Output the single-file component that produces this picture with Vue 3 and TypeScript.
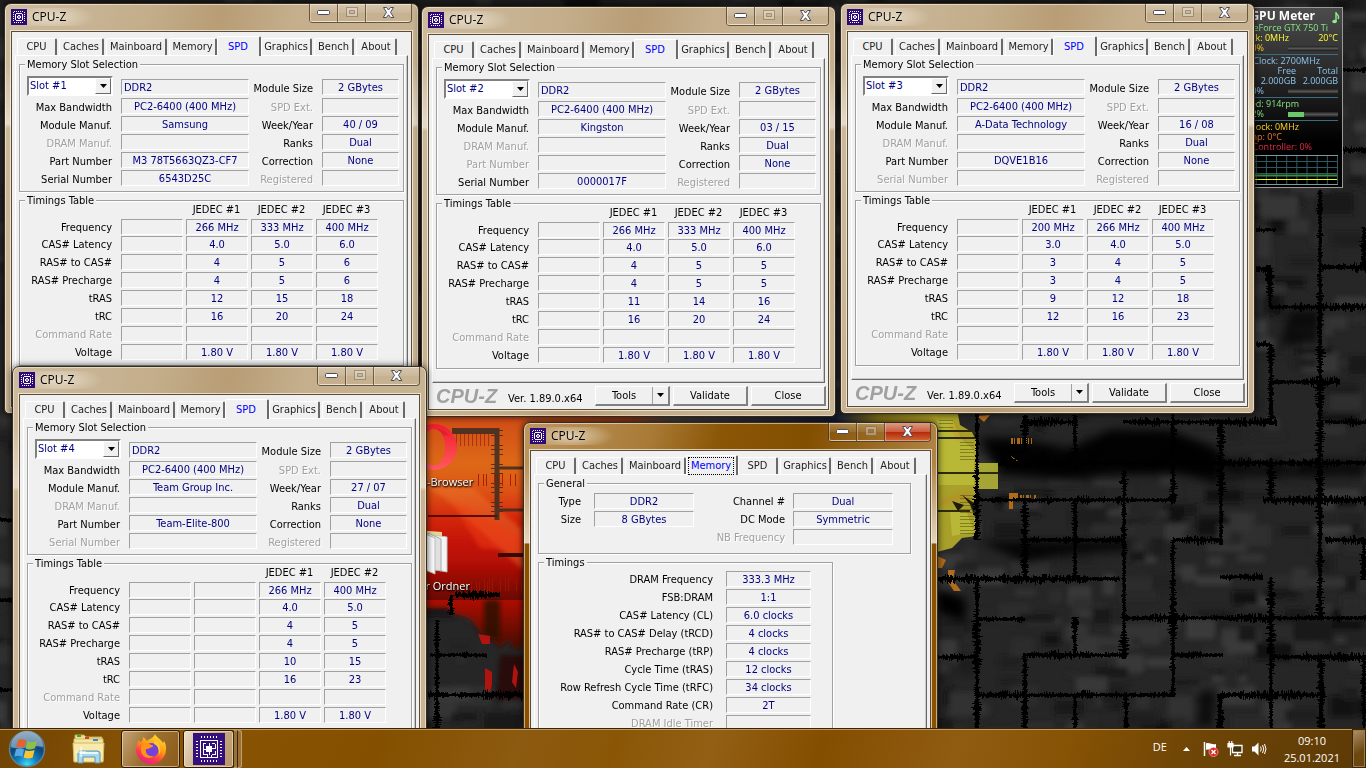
<script setup lang="ts">
interface Field {
  label: string
  value: string
  off?: boolean
}
interface TimingRow {
  label: string
  values: string[]
  off?: boolean
}
interface BaseWindow {
  id: string
  tab: string
  x: number
  y: number
  active?: boolean
  footer: boolean
}
interface SpdWindow extends BaseWindow {
  kind: 'spd'
  slot: string
  left: Field[]
  right: Field[]
  heads: string[]
  timings: TimingRow[]
}
interface MemoryWindow extends BaseWindow {
  kind: 'memory'
}
type CpuzWindow = SpdWindow | MemoryWindow

const tabs = [
  { name: 'CPU', width: 40 },
  { name: 'Caches', width: 45 },
  { name: 'Mainboard', width: 61 },
  { name: 'Memory', width: 48 },
  { name: 'SPD', width: 40 },
  { name: 'Graphics', width: 51 },
  { name: 'Bench', width: 40 },
  { name: 'About', width: 41 },
]

const rowNames = ['Frequency', 'CAS# Latency', 'RAS# to CAS#', 'RAS# Precharge', 'tRAS', 'tRC', 'Command Rate', 'Voltage']

function spd(
  x: number,
  y: number,
  slot: number,
  footer: boolean,
  maker: string,
  part: string,
  serial: string,
  week: string,
  heads: string[],
  columns: string[][],
): SpdWindow {
  return {
    id: `slot${slot}`,
    kind: 'spd',
    tab: 'SPD',
    x,
    y,
    footer,
    slot: `Slot #${slot}`,
    left: [
      { label: 'Max Bandwidth', value: 'PC2-6400 (400 MHz)' },
      { label: 'Module Manuf.', value: maker },
      { label: 'DRAM Manuf.', value: '', off: true },
      { label: 'Part Number', value: part, off: part === '' },
      { label: 'Serial Number', value: serial, off: serial === '' },
    ],
    right: [
      { label: 'SPD Ext.', value: '', off: true },
      { label: 'Week/Year', value: week },
      { label: 'Ranks', value: 'Dual' },
      { label: 'Correction', value: 'None' },
      { label: 'Registered', value: '', off: true },
    ],
    heads,
    timings: rowNames.map((label, row) => ({
      label,
      off: label === 'Command Rate',
      values: columns.map((c) => c[row] ?? ''),
    })),
  }
}

const none: string[] = []
const col = (mhz: number, ...t: (string | number)[]): string[] => [
  `${mhz} MHz`,
  ...t.map(String),
  '',
  '1.80 V',
]

const windows: CpuzWindow[] = [
  spd(4, 3, 1, false, 'Samsung', 'M3 78T5663QZ3-CF7', '6543D25C', '40 / 09', ['', 'JEDEC #1', 'JEDEC #2', 'JEDEC #3'], [
    none,
    col(266, '4.0', 4, 4, 12, 16),
    col(333, '5.0', 5, 5, 15, 20),
    col(400, '6.0', 6, 6, 18, 24),
  ]),
  spd(421, 6, 2, true, 'Kingston', '', '0000017F', '03 / 15', ['', 'JEDEC #1', 'JEDEC #2', 'JEDEC #3'], [
    none,
    col(266, '4.0', 4, 4, 11, 16),
    col(333, '5.0', 5, 5, 14, 20),
    col(400, '6.0', 5, 5, 16, 24),
  ]),
  spd(840, 3, 3, true, 'A-Data Technology', 'DQVE1B16', '', '16 / 08', ['', 'JEDEC #1', 'JEDEC #2', 'JEDEC #3'], [
    none,
    col(200, '3.0', 3, 3, 9, 12),
    col(266, '4.0', 4, 4, 12, 16),
    col(400, '5.0', 5, 5, 18, 23),
  ]),
  spd(12, 366, 4, false, 'Team Group Inc.', 'Team-Elite-800', '', '27 / 07', ['', '', 'JEDEC #1', 'JEDEC #2'], [
    none,
    none,
    col(266, '4.0', 4, 4, 10, 16),
    col(400, '5.0', 5, 5, 15, 23),
  ]),
  { id: 'memory', kind: 'memory', tab: 'Memory', x: 523, y: 422, active: true, footer: false },
]

const generalLeft: Field[] = [
  { label: 'Type', value: 'DDR2' },
  { label: 'Size', value: '8 GBytes' },
]
const generalRight: Field[] = [
  { label: 'Channel #', value: 'Dual' },
  { label: 'DC Mode', value: 'Symmetric' },
  { label: 'NB Frequency', value: '', off: true },
]
const memoryTimings: Field[] = [
  { label: 'DRAM Frequency', value: '333.3 MHz' },
  { label: 'FSB:DRAM', value: '1:1' },
  { label: 'CAS# Latency (CL)', value: '6.0 clocks' },
  { label: 'RAS# to CAS# Delay (tRCD)', value: '4 clocks' },
  { label: 'RAS# Precharge (tRP)', value: '4 clocks' },
  { label: 'Cycle Time (tRAS)', value: '12 clocks' },
  { label: 'Row Refresh Cycle Time (tRFC)', value: '34 clocks' },
  { label: 'Command Rate (CR)', value: '2T' },
  { label: 'DRAM Idle Timer', value: '', off: true },
]

/* Wallpaper: soft grey patches with a mesh of frayed black lines. */
let seed = 7
const rand = (): number => {
  seed = (seed * 16807) % 2147483647
  return seed / 2147483647
}
interface Patch {
  x: number
  y: number
  w: number
  h: number
  fill: string
}
const patches: Patch[] = Array.from({ length: 1800 }, () => {
  const tone = Math.round(14 + rand() * 50)
  return {
    x: Math.round(rand() * 1400) - 20,
    y: Math.round(rand() * 780) - 10,
    w: Math.round(10 + rand() * 30),
    h: Math.round(4 + rand() * 18),
    fill: `rgb(${tone},${tone},${tone})`,
  }
})
const meshH: number[][] = [
  [1022, 1075, 422], [1123, 1277, 422], [1325, 1366, 422], [998, 1366, 463], [977, 1176, 500], [1263, 1366, 500],
  [1023, 1123, 540], [1173, 1220, 540], [1325, 1366, 540], [938, 1120, 579], [1220, 1263, 577], [977, 1025, 619],
  [1123, 1366, 618], [938, 977, 657], [1023, 1127, 655], [1173, 1223, 655], [1273, 1366, 657], [977, 1175, 695],
  [1217, 1325, 695], [1256, 1276, 230], [1320, 1366, 267], [1256, 1272, 269], [1270, 1366, 307], [1256, 1270, 344],
  [1270, 1340, 382], [1340, 1366, 150], [1340, 1366, 70], [430, 487, 655], [428, 523, 695], [455, 500, 595],
  [0, 12, 520], [0, 12, 600], [0, 12, 690],
]
const meshV: number[][] = [
  [977, 413, 540], [977, 580, 728], [1025, 415, 450], [1025, 655, 728], [1025, 500, 578], [1075, 415, 470],
  [1075, 500, 580], [1075, 617, 655], [1075, 694, 728], [1124, 470, 655], [1126, 694, 728], [1173, 413, 500],
  [1173, 540, 697], [1221, 420, 545], [1220, 694, 728], [1271, 400, 424], [1271, 458, 500], [1271, 577, 728],
  [1320, 190, 620], [1321, 656, 728], [1270, 267, 307], [1271, 344, 420], [1364, 227, 270], [1364, 540, 580],
  [1364, 656, 728], [437, 620, 728], [451, 595, 615],
]
/* Teeth grow and shrink along a line, as a slowly varying random walk. */
function frayed(from: number, to: number, at: number, vertical: boolean): string {
  let reach = 2
  let d = ''
  for (let p = from; p < to; p += 1) {
    reach = Math.max(1, Math.min(5, reach + (rand() - 0.5) * 2))
    const a = Math.round(1 + rand() * reach)
    const b = Math.round(1 + rand() * reach)
    d += vertical ? `M${at - a} ${p + 0.5}H${at + b}` : `M${p + 0.5} ${at - a}V${at + b}`
  }
  return d
}
const mesh: string[] = [
  ...meshH.map(([a, b, y]) => frayed(a, b, y, false)),
  ...meshV.map(([x, a, b]) => frayed(a, b, x, true)),
]
const chipPins = [4, 6, 8, 10, 12]
const bigPins = [9, 12, 15, 18, 21, 24]
const graphX = [16, 26, 36, 46, 56, 66, 76, 86, 96, 106, 116, 126]
</script>

<template>
  <main class="desktop">
    <svg class="wallpaper" viewBox="0 0 1366 768" preserveAspectRatio="xMinYMin slice" aria-hidden="true">
      <defs>
        <filter id="soft" x="-5%" y="-5%" width="110%" height="110%"><feGaussianBlur stdDeviation="2.500" /></filter>
        <filter id="wide" x="-5%" y="-20%" width="110%" height="140%"><feGaussianBlur stdDeviation="5" /></filter>
        <filter id="soft2"><feGaussianBlur stdDeviation="2" /></filter>
        <linearGradient id="fire" x1="0" y1="0" x2="0" y2="1">
          <stop offset="0" stop-color="#cf4a18" />
          <stop offset=".25" stop-color="#de6a18" />
          <stop offset=".42" stop-color="#dc4a12" />
          <stop offset=".56" stop-color="#d01408" />
          <stop offset=".8" stop-color="#a80c04" />
          <stop offset="1" stop-color="#400804" />
        </linearGradient>
        <linearGradient id="strip">
          <stop offset="0" stop-color="#c8501c" />
          <stop offset=".25" stop-color="#9a3c1c" />
          <stop offset=".35" stop-color="#4c4440" />
          <stop offset=".6" stop-color="#2a2a38" />
          <stop offset=".75" stop-color="#161c38" />
          <stop offset=".85" stop-color="#80701c" />
          <stop offset="1" stop-color="#b8a828" />
        </linearGradient>
      </defs>
      <rect width="1366" height="768" fill="#262626" />
      <g filter="url(#soft)" opacity=".8">
        <rect v-for="(p, i) in patches" :key="i" :x="p.x" :y="p.y" :width="p.w" :height="p.h" :fill="p.fill" />
      </g>
      <g filter="url(#wide)" fill="#000">
        <path d="M980 438H1010L1070 448L1110 430H1170L1220 450V482L1180 474H1100L1080 480L1000 474Z" opacity=".95" />
        <path d="M978 541H1060L1130 540V550L1070 554L1025 562Z" opacity=".85" />
        <path d="M938 590L965 598V622L938 612Z" />
        <path d="M1213 460H1366V476H1230ZM1290 310H1320V345H1280ZM1200 690H1215V728H1195Z" opacity=".7" />
        <path d="M0 0H1366V6H0Z" opacity=".6" />
      </g>
      <rect x="523" y="414" width="417" height="12" fill="url(#strip)" />
      <path d="M420 414H526V645L514 650L508 640L500 648L492 640L480 632L470 618L455 614L447 608L420 608Z" fill="url(#fire)" filter="url(#soft2)" />
      <path d="M420 414H526V600H420Z" fill="url(#fire)" opacity=".6" />
      <g filter="url(#soft2)">
        <path d="M427 486L447 500L523 570V530L470 486Z" fill="#f08030" opacity=".4" />
        <path d="M450 500L480 548L523 552V536Z" fill="#f03c10" opacity=".5" />
        <path d="M484 600H500V640L484 636Z" fill="#241008" opacity=".8" />
        <path d="M500 655H526V700H496Z" fill="#280404" opacity=".7" />
      </g>
      <path d="M485 668L492 672V684L490 692L485 690ZM514 664L518 672L516 688L512 682ZM478 634L490 636V644H482Z" fill="#b01410" />
      <g fill="none" stroke="#3c2c20" opacity=".85">
        <path d="M452 431H497" stroke-width="6" />
        <path d="M497 428V520" stroke-width="5" />
        <path d="M497 468H523M498 510H523" stroke-width="3" />
        <path d="M428 516H497" stroke="#3a0804" stroke-width="2" />
        <path d="M497 430V520" stroke-width="12" stroke-dasharray="1 4 1 9 1 3" />
        <path d="M452 440H490" stroke="#a02c10" stroke-width="12" stroke-dasharray="1 3" />
        <path d="M498 555H523" stroke-width="4" stroke="#200" />
        <path d="M478 480H518M484 585H523M455 588H495" stroke="#9c1804" stroke-width="12" stroke-dasharray="1 4 1 2 1 7" />
      </g>
      <path d="M937 414H958L960 425L972 432L976 440V500L970 505L976 520V536L962 538L952 548L937 552Z" fill="#a8a02a" />
      <path d="M937 420H952L962 440L974 450V485H937ZM977 463H998V489H977ZM950 512L966 510L974 532L952 536Z" fill="#bcbc38" opacity=".85" />
      <path d="M952 425L960 440M940 502L970 494" stroke="#c87828" stroke-width="4" opacity=".5" fill="none" filter="url(#soft2)" />
      <path d="M937 431H976M937 438H976M937 473H998M937 511H970" stroke="#2c2a08" stroke-width="2" fill="none" />
      <path d="M967 442V462M967 495V536M946 420V430" stroke="#5a5814" stroke-width="14" stroke-dasharray="1 2 1 3" fill="none" opacity=".6" />
      <path d="M952 501L964 505L958 511ZM962 495L974 503V509Z" fill="#241808" />
      <path d="M977 416L990 415L984 422ZM1011 456L1018 461H1011ZM1009 493H1018V498L1013 500V509H1009ZM948 570H955L953 580L961 591H954L948 582ZM937 556L946 560L942 568H937Z" fill="#b06c1c" />
      <path d="M1011 441H1032M1020 498H1036" stroke="#a8681c" stroke-width="6" stroke-dasharray="2 1 1 2 3 1 1 3" />
      <path v-for="(d, i) in mesh" :key="i" :d="d" fill="none" stroke="#000" />
    </svg>

    <a class="shortcut opera" href="#opera">
      <svg width="48" height="48" viewBox="0 0 48 48" aria-hidden="true">
        <defs>
          <linearGradient id="op" x1="0" y1="0" x2="0" y2="1">
            <stop offset="0" stop-color="#f01b2d" />
            <stop offset="1" stop-color="#ff5a5c" />
          </linearGradient>
        </defs>
        <path fill="url(#op)" fill-rule="evenodd" d="M24 1A23 23 0 1 1 24 47A23 23 0 1 1 24 1ZM24 6C17 6 13 14 13 24S17 42 24 42S35 34 35 24S31 6 24 6Z" />
        <path fill="#b70d1e" opacity=".3" d="M24 6C30 5 36 8 40 13C38 12 36 12 34 13C31 9 28 6 24 6Z" />
      </svg>
      <span>Opera-Browser</span>
    </a>
    <a class="shortcut folder" href="#ordner">
      <svg width="48" height="48" viewBox="0 0 48 48" aria-hidden="true">
        <path d="M6 3L32 5V40L6 44Z" fill="#e8d48a" />
        <path d="M22 8L37 10V45L22 42Z" fill="#f4f4f4" stroke="#c4c4c4" />
        <path d="M18 6L31 12V44L18 42Z" fill="#e0e0e0" stroke="#aaa" />
        <path d="M8 4L25 11V47L8 40Z" fill="#fafafa" stroke="#bbb" />
      </svg>
      <span>Neuer Ordner</span>
    </a>

    <aside class="gadget" aria-label="GPU Meter">
      <h2>GPU Meter</h2>
      <svg class="note" width="8" height="13" viewBox="0 0 8 13" aria-hidden="true">
        <path d="M4 1V10M4 2C5 4 8 4 6 8" stroke="#8cf08c" stroke-width="1.4" fill="none" />
        <ellipse cx="2.600" cy="10.500" rx="2.300" ry="1.700" fill="#8cf08c" />
      </svg>
      <p class="green end-name">GeForce GTX 750 Ti</p>
      <p class="yellow split"><span class="reading">GPU Clock: 0MHz</span><span>20°C</span></p>
      <p class="gold split meter"><span class="percent">0%</span><i></i></p>
      <hr />
      <p class="sky end-mem">Mem. Clock: 2700MHz</p>
      <p class="sky pair"><span>Free</span><span>Total</span></p>
      <p class="sky pair"><span>2.000GB</span><span>2.000GB</span></p>
      <p class="sky split meter"><span class="percent">0%</span><i></i></p>
      <hr />
      <p class="green end-fan">Fan Speed: 914rpm</p>
      <p class="green split meter"><span class="percent">32%</span><i class="fill"></i></p>
      <hr />
      <p class="gold end-fan">PCB Clock: 0MHz</p>
      <p class="orange end-temp">PCB Temp: 0°C</p>
      <p class="red end-ctl">Mem. Controller: 0%</p>
      <svg class="graph" viewBox="0 0 126 30" height="30" preserveAspectRatio="none" aria-hidden="true">
        <rect x=".5" y=".5" width="125" height="29" fill="#000" stroke="#7c98a0" />
        <path v-for="x in graphX" :key="x" :d="`M${x - 0.5} 1V29`" stroke="#2c5a60" />
        <path d="M1 6.500H125M1 12.500H125M1 18.500H125" stroke="#2c5a60" />
        <path d="M1 20.500H125" stroke="#3f8a40" stroke-width="2" />
        <path d="M1 24.500H125" stroke="#ff0" />
      </svg>
    </aside>

    <section
      v-for="w in windows"
      :key="w.id"
      class="window"
      :class="{ active: w.active }"
      :style="{ left: w.x + 'px', top: w.y + 'px' }"
      :aria-labelledby="w.id + '-title'"
    >
      <header class="title">
        <svg width="16" height="16" viewBox="0 0 16 16" aria-hidden="true" shape-rendering="crispEdges">
          <rect width="16" height="16" fill="#2e0a78" />
          <g fill="#fff">
            <template v-for="p in chipPins" :key="p">
              <rect :x="p - 1" y="2" width="1" height="1" />
              <rect :x="p - 1" y="13" width="1" height="1" />
              <rect x="2" :y="p - 1" width="1" height="1" />
              <rect x="13" :y="p - 1" width="1" height="1" />
            </template>
            <path d="M5 4H11V5H12V11H11V12H5V11H4V5H5ZM5 5V11H11V5Z" fill-rule="evenodd" />
            <path d="M7 6H9V7H10V9H9V10H7V9H6V7H7Z" />
          </g>
          <rect x="7" y="7" width="2" height="2" fill="#8c78c0" />
        </svg>
        <h1 :id="w.id + '-title'">CPU-Z</h1>
        <div class="caption">
          <button type="button" aria-label="Minimize">
            <svg width="13" height="7" viewBox="0 0 13 7"><rect x=".5" y="1.500" width="12" height="4" rx="1" fill="#fff" stroke="#4a4a58" /></svg>
          </button>
          <button type="button" aria-label="Maximize" disabled>
            <svg width="12" height="10" viewBox="0 0 12 10"><path d="M.5.5H11.500V9.500H.5ZM3.500 3.500H8.500V6.500H3.500Z" fill="#fff" fill-opacity=".3" fill-rule="evenodd" stroke="#6a5c48" stroke-opacity=".5" /></svg>
          </button>
          <button class="close" type="button" aria-label="Close window">
            <svg width="13" height="11" viewBox="0 0 13 11"><path d="M1.500 .5H4.500L6.500 3L8.500.5H11.500L8.500 5.300L11.800 10.500H8.700L6.500 7.800L4.300 10.500H1.200L4.500 5.300Z" fill="#fff" stroke="#4a4a58" /></svg>
          </button>
        </div>
      </header>

      <div class="client">
        <div class="tabs" role="tablist">
          <button
            v-for="t in tabs"
            :key="t.name"
            type="button"
            role="tab"
            :aria-selected="t.name === w.tab"
            :style="{ width: t.width + 'px' }"
          ><span>{{ t.name }}</span></button>
        </div>

        <div v-if="w.kind === 'spd'" class="page" role="tabpanel">
          <fieldset class="slot">
            <legend>Memory Slot Selection</legend>
            <div class="grid">
              <div class="combo">
                <select :aria-label="w.slot"><option>{{ w.slot }}</option></select>
                <span class="arrow"><svg width="7" height="4" viewBox="0 0 7 4"><path d="M0 0H7L3.500 4Z" /></svg></span>
              </div>
              <output class="box start">DDR2</output>
              <label :for="w.id + '-size'">Module Size</label>
              <output :id="w.id + '-size'" class="box">2 GBytes</output>
              <template v-for="(f, i) in w.left" :key="f.label">
                <label :for="w.id + '-l' + i" :class="{ off: f.off }">{{ f.label }}</label>
                <output :id="w.id + '-l' + i" class="box">{{ f.value }}</output>
                <label :for="w.id + '-r' + i" :class="{ off: w.right[i].off }">{{ w.right[i].label }}</label>
                <output :id="w.id + '-r' + i" class="box">{{ w.right[i].value }}</output>
              </template>
            </div>
          </fieldset>
          <fieldset class="timings">
            <legend>Timings Table</legend>
            <table>
              <thead>
                <tr>
                  <td></td>
                  <th v-for="(h, i) in w.heads" :key="i" scope="col">{{ h }}</th>
                </tr>
              </thead>
              <tbody>
                <tr v-for="r in w.timings" :key="r.label">
                  <th scope="row" :class="{ off: r.off }">{{ r.label }}</th>
                  <td v-for="(v, i) in r.values" :key="i"><div class="box">{{ v }}</div></td>
                </tr>
              </tbody>
            </table>
          </fieldset>
        </div>

        <div v-else class="page" role="tabpanel">
          <fieldset class="general">
            <legend>General</legend>
            <div class="columns">
              <div class="list narrow">
                <template v-for="f in generalLeft" :key="f.label">
                  <label :for="'g-' + f.label">{{ f.label }}</label>
                  <output :id="'g-' + f.label" class="box">{{ f.value }}</output>
                </template>
              </div>
              <div class="list">
                <template v-for="(f, i) in generalRight" :key="f.label">
                  <label :for="'h-' + i" :class="{ off: f.off }">{{ f.label }}</label>
                  <output :id="'h-' + i" class="box">{{ f.value }}</output>
                </template>
              </div>
            </div>
          </fieldset>
          <fieldset class="clocks">
            <legend>Timings</legend>
            <div class="list wide">
              <template v-for="(f, i) in memoryTimings" :key="f.label">
                <label :for="'m-' + i" :class="{ off: f.off }">{{ f.label }}</label>
                <output :id="'m-' + i" class="box">{{ f.value }}</output>
              </template>
            </div>
          </fieldset>
        </div>

        <footer class="footer">
          <template v-if="w.footer">
            <strong>CPU-Z</strong>
            <span class="version">Ver. 1.89.0.x64</span>
            <div class="tools">
              <button type="button">Tools</button>
              <button type="button" aria-label="Tools menu"><svg width="7" height="4" viewBox="0 0 7 4"><path d="M0 0H7L3.500 4Z" /></svg></button>
            </div>
            <button type="button" class="push">Validate</button>
            <button type="button" class="push">Close</button>
          </template>
        </footer>
      </div>
    </section>

    <nav class="taskbar" aria-label="Taskbar">
      <button type="button" class="orb" aria-label="Start">
        <svg width="38" height="38" viewBox="0 0 38 38">
          <defs>
            <radialGradient id="orb" cx=".5" cy=".95" r=".9">
              <stop offset="0" stop-color="#3ce0ff" />
              <stop offset=".3" stop-color="#1484c0" />
              <stop offset=".65" stop-color="#0c4478" />
              <stop offset="1" stop-color="#587c98" />
            </radialGradient>
          </defs>
          <circle cx="19" cy="19" r="17.500" fill="url(#orb)" stroke="#5c8090" stroke-width="1.500" />
          <path d="M3 17A16 16 0 0 1 35 17C26 14 12 21 3 17Z" fill="#c8dce8" opacity=".5" />
          <path d="M10 10C13 8.500 15.500 9 18 10.500L16.300 18C13.500 16.500 11.500 16.500 8.300 17.700Z" fill="#e8602c" />
          <path d="M19.500 11.200C22.500 12.700 25.500 12.500 29 11L27 18.300C24 19.700 20.500 19.800 17.800 18.500Z" fill="#90c040" />
          <path d="M8 19.200C11 18 13.500 18 16 19.500L14.300 27C11.500 25.300 9.500 25.500 6.300 26.800Z" fill="#58a8e4" />
          <path d="M17.400 20.200C20.500 21.500 23.500 21.300 26.600 20L24.700 27.600C21.500 29 18.500 28.800 15.600 27.500Z" fill="#fcc430" />
        </svg>
      </button>
      <button type="button" class="task plain" aria-label="Windows Explorer">
        <svg width="34" height="32" viewBox="0 0 34 32">
          <path d="M3 2H12L14 4H30V9H3Z" fill="#f2dc8c" stroke="#c8a850" />
          <rect x="5" y="2" width="4" height="2" fill="#20b040" />
          <path d="M2 6H31V28H2Z" fill="#f6e6a4" stroke="#d8bc68" />
          <rect x="13" y="4" width="4" height="2" fill="#d04030" />
          <rect x="21" y="6" width="5" height="2" fill="#3088e0" />
          <path d="M1 10H32L31 29H2Z" fill="#f8eaac" stroke="#d4b868" />
          <path d="M6 20Q6 18 8 18H25Q28 18 28 20V30H23V24H11V30H6Z" fill="#a8d8ec" stroke="#5898b8" />
          <path d="M8 20H26" stroke="#e8f8ff" stroke-width="2" />
          <path d="M9 14V24M4 19H14" stroke="#fff" stroke-width="1" />
        </svg>
      </button>
      <button type="button" class="task framed" aria-label="Firefox">
        <svg width="32" height="32" viewBox="0 0 32 32">
          <defs>
            <linearGradient id="fx" x1=".8" y1="0" x2=".3" y2="1">
              <stop offset="0" stop-color="#ffe23c" />
              <stop offset=".45" stop-color="#ff980e" />
              <stop offset=".75" stop-color="#ff3750" />
              <stop offset="1" stop-color="#e0208c" />
            </linearGradient>
          </defs>
          <path d="M20 1C21 4 27 7 28 10C29 9 29 8 28.500 7C32 12 32 20 28 25C22 33 10 33 4 25C0 20 0 13 4 7C4 9 5 9 6 9C8 7 8 6 8 4C10 5 11 7 12 8C15 5 18 6 20 1Z" fill="url(#fx)" />
          <circle cx="16.500" cy="17" r="7" fill="#7442d8" />
          <path d="M7 12C10 10 14 10 16 12C18 12 19 13 17 14C14 15 14 16 11 16C10 21 14 24 19 23C15 27 6 25 6 17C6 15 6 13 7 12Z" fill="#ff9418" />
          <path d="M20 7C25 9 27 17 24 22C25 16 22 12 19 11Z" fill="#ffcb2c" />
        </svg>
      </button>
      <button type="button" class="task framed lit" aria-label="CPU-Z">
        <svg width="32" height="32" viewBox="0 0 32 32" shape-rendering="crispEdges">
          <rect width="32" height="32" fill="#35107c" />
          <g fill="#fff">
            <template v-for="p in bigPins" :key="p">
              <rect :x="p - 1" y="3" width="1" height="2" />
              <rect :x="p - 1" y="27" width="1" height="2" />
              <rect x="3" :y="p - 1" width="2" height="1" />
              <rect x="27" :y="p - 1" width="2" height="1" />
            </template>
            <rect x="13" y="13" width="6" height="6" />
          </g>
          <path d="M7 7.500H25M7 24.500H25M7.500 7V25M24.500 7V25M13 10.500H10.500V22M16 10V13M19 10.500H22M10 16H13M19 15.500H22V11M16 19V22M11 21.500H14V24M19 21.500H22V18M18 22V24" fill="none" stroke="#fff" />
        </svg>
      </button>
      <i class="stack"></i><i class="stack"></i>
      <div class="tray">
        <span class="lang">DE</span>
        <svg class="up" width="7" height="4" viewBox="0 0 7 4" aria-hidden="true"><path d="M3.500 0L7 4H0Z" fill="#fff" /></svg>
        <svg width="16" height="16" viewBox="0 0 16 16" aria-hidden="true">
          <path d="M1.500 1V15" stroke="#fff" stroke-width="1.500" />
          <path d="M3 2.500C6 1 8 4 13 3V9C9 10 6 7.500 3 9Z" fill="#fff" />
          <circle cx="10.500" cy="11" r="4.500" fill="#e02020" stroke="#ffc8c8" stroke-width=".6" />
          <path d="M8.500 9L12.500 13M12.500 9L8.500 13" stroke="#fff" stroke-width="1.500" />
        </svg>
        <svg width="16" height="16" viewBox="0 0 16 16" aria-hidden="true">
          <path d="M5.500 4.500H15V11.500H5.500ZM7 14.500H14M10.500 12V14" fill="#403010" stroke="#fff" stroke-width="1.300" />
          <path d="M1 2.500H6V6H1ZM2.200 0V3M4.800 0V3M3.500 6V14.500" fill="#fff" stroke="#fff" stroke-width="1.200" />
        </svg>
        <svg width="16" height="16" viewBox="0 0 16 16" aria-hidden="true">
          <path d="M1 5.500H3.500L7.500 1.500V14.500L3.500 10.500H1Z" fill="#fff" />
          <path d="M9.500 5.500Q11 8 9.500 10.500M11.500 4Q14 8 11.500 12M13.500 3Q16.500 8 13.500 13" fill="none" stroke="#fff" />
        </svg>
        <time class="clock" datetime="2021-01-25T09:10"><span>09:10</span><span>25.01.2021</span></time>
        <button type="button" class="peek" aria-label="Show desktop"></button>
      </div>
    </nav>
  </main>
</template>

<style>
body {
  margin: 0;
  background: #161616;
}
</style>

<style scoped>
.desktop {
  position: relative;
  display: flex;
  flex-direction: column;
  justify-content: flex-end;
  height: 100vh;
  overflow: hidden;
  font: 11px/14px "DejaVu Sans Condensed", "DejaVu Sans", sans-serif;
  color: #000;
}
.desktop button {
  margin: 0;
  padding: 0;
  font: inherit;
  color: inherit;
}
svg {
  display: block;
}
.wallpaper {
  position: absolute;
  inset: 0;
  width: 100%;
  height: 100%;
}
.shortcut {
  position: absolute;
  left: 384px;
  display: flex;
  flex-direction: column;
  align-items: center;
  width: 100px;
  gap: 2px;
  color: #fff;
  font: 11px/18px "Open Sans", sans-serif;
  text-decoration: none;
  text-shadow: 0 1px 2px #000, 1px 1px 2px #000;
}
.opera { top: 423px; }
.folder { top: 527px; }

/* gadget */
.gadget {
  position: absolute;
  left: 1205px;
  top: 7px;
  width: 128px;
  padding: 0 4px 2px;
  border: 1px solid #9a9a9a;
  background: linear-gradient(#4c4c4c, #2a2a2a 35%, #000 75%);
  color: #fff;
  font: 9px/10px "Open Sans", sans-serif;
}
.gadget h2 {
  margin: 0;
  padding-right: 23px;
  font: bold 12px/15px "Open Sans", sans-serif;
  text-align: right;
}
.gadget .note {
  position: absolute;
  right: 2px;
  top: 3px;
}
.gadget p {
  margin: 0;
  text-align: right;
  white-space: nowrap;
}
.gadget hr {
  margin: 1px 0;
  border: 0;
  border-top: 1px solid #3c6c80;
}
.gadget .split {
  display: flex;
  justify-content: space-between;
}
.gadget .meter { align-items: center; }
.gadget .meter i {
  width: 50px;
  height: 5px;
  background: linear-gradient(#222, #555, #181818);
}
.gadget .meter i.fill {
  background: linear-gradient(90deg, #6cc86c 16px, transparent 16px), linear-gradient(#222, #555, #181818);
}
.reading { width: 79px; }
.percent { width: 54px; }
.pair {
  display: grid;
  grid-template-columns: 1fr 42px;
}
.end-name { padding-right: 10px; }
.end-mem { padding-right: 18px; }
.end-fan { padding-right: 39px; }
.end-temp { padding-right: 56px; }
.end-ctl { padding-right: 26px; }
.green { color: #88e488; }
.yellow { color: #ff3; }
.gold { color: #ffd020; }
.sky { color: #8cc4ec; }
.orange { color: #f47830; }
.red { color: #e42848; }
.graph {
  width: 100%;
  margin-top: 3px;
}

/* window frame */
.window {
  position: absolute;
  box-sizing: border-box;
  width: 415px;
  padding: 0 6px 6px;
  border: 1px solid #352b20;
  border-radius: 7px 7px 5px 5px;
  background:
    linear-gradient(rgba(232, 224, 210, 0) 60px, rgba(232, 224, 210, .85) 120px, rgba(232, 224, 210, 0) 124px),
    linear-gradient(100deg, #cdbb9f 0, #c3ad8a 30%, #b89d75 45%, #c4ae8c 60%, #c9b596);
  box-shadow: inset 0 0 0 1px rgba(255, 248, 230, .55), 0 0 7px rgba(0, 0, 0, .75);
}
.window.active {
  background:
    linear-gradient(rgba(240, 232, 218, 0) 40px, rgba(240, 232, 218, .8) 120px, rgba(240, 232, 218, 0) 121px),
    linear-gradient(180deg, transparent 120px, #8a5200 120px),
    linear-gradient(105deg, #bc9560 0, #a87a36 25%, #8b5606 38%, #824e00 55%, #b08344 80%, #b98f55);
}
.title {
  display: flex;
  align-items: flex-start;
  height: 27px;
}
.title > svg {
  position: relative;
  z-index: 1;
  margin-top: 5px;
}
.title h1 {
  flex: 1;
  margin: 4px 0 0 -10px;
  padding-left: 15px;
  background: radial-gradient(ellipse 44px 14px at 34px 9px, rgba(240, 232, 215, .75), transparent);
  font: 12px/18px "Open Sans", sans-serif;
}
.caption {
  display: flex;
  height: 18px;
  border: 1px solid rgba(70, 55, 35, .75);
  border-top: 0;
  border-radius: 0 0 4px 4px;
  box-shadow: inset 0 -1px 0 rgba(255, 250, 235, .5);
}
.caption button {
  display: grid;
  place-items: center;
  box-sizing: border-box;
  width: 28px;
  border: 0;
  border-right: 1px solid rgba(70, 55, 35, .7);
  background: linear-gradient(rgba(255, 255, 255, .28), rgba(255, 255, 255, .08) 50%, transparent 50%);
  box-shadow: inset 1px -1px 0 rgba(255, 250, 235, .35);
}
.caption button.close {
  width: 45px;
  border-right: 0;
  border-radius: 0 0 4px;
}
.caption svg { margin-top: -2px; }
.active .caption button.close {
  background: linear-gradient(#dc9c84, #cc5c40 48%, #b42808 50%, #d06838);
}

/* client area */
.client {
  display: flex;
  flex-direction: column;
  border: 1px solid #5a4c3a;
  background: #f0f0f0;
  box-shadow: 0 0 0 1px rgba(255, 246, 228, .7);
}
.tabs {
  display: flex;
  align-items: flex-end;
  gap: 2px;
  padding: 4px 5px 0;
  height: 19px;
}
.tabs button {
  position: relative;
  box-sizing: border-box;
  height: 17px;
  border: 1px solid #fff;
  border-right: 2px solid #696969;
  border-bottom: 0;
  border-radius: 2px 2px 0 0;
  background: #f0f0f0;
  color: #222;
  line-height: 16px;
  white-space: nowrap;
}
.tabs button span {
  display: flex;
  justify-content: center;
}
.tabs button[aria-selected="true"] {
  z-index: 1;
  box-sizing: content-box;
  height: 19px;
  margin: 0 -2px -1px;
  padding: 0 1px 0 0;
  color: #00f;
  line-height: 18px;
}
.active .tabs button[aria-selected="true"] span {
  margin: 0 1px;
  outline: 1px dotted #000;
  outline-offset: -1px;
}
.page {
  box-sizing: border-box;
  min-height: 323px;
  margin: 0 3px;
  padding: 2px 3px 13px;
  border: 1px solid #fff;
  border-right-color: #696969;
  border-bottom-color: #696969;
  box-shadow: inset -1px -1px 0 #c8c8c8;
}
fieldset {
  min-width: 0;
  margin: 0;
  padding: 8px 0 3px;
  border: 1px solid #a0a0a0;
  box-shadow: inset 1px 1px 0 #fff, 1px 1px 0 #fff;
}
legend {
  margin-left: 5px;
  padding: 0 2px;
  background: #f0f0f0;
  line-height: 13px;
}
.grid {
  display: grid;
  grid-template-columns: 101px 128px 1fr 77px;
  grid-template-rows: 19px;
  grid-auto-rows: 18px;
  padding-right: 4px;
}
.grid label,
.list label {
  padding: 2px 9px 0 0;
  line-height: 16px;
  text-align: right;
  white-space: nowrap;
}
.off {
  color: #a0a0a0;
  text-shadow: 1px 1px 0 #fff;
}
.box {
  display: block;
  box-sizing: border-box;
  height: 16px;
  border: 1px solid #fff;
  border-top-color: #a0a0a0;
  border-left-color: #a0a0a0;
  color: #000080;
  line-height: 15px;
  text-align: center;
  white-space: nowrap;
}
.box.start {
  padding-left: 2px;
  text-align: left;
}
.combo {
  position: relative;
  margin: -3px 8px 0 7px;
  height: 20px;
}
.combo select {
  box-sizing: border-box;
  width: 100%;
  height: 20px;
  padding: 0 1px;
  border: 2px solid;
  border-color: #808080 #fff #fff #808080;
  border-radius: 0;
  background: #fff;
  color: #000080;
  font: inherit;
  appearance: none;
}
.combo .arrow {
  position: absolute;
  right: 2px;
  top: 2px;
  display: grid;
  place-items: center;
  width: 14px;
  height: 14px;
  border: 1px solid #fff;
  border-right-color: #696969;
  border-bottom-color: #696969;
  background: #f0f0f0;
  pointer-events: none;
}
.timings {
  margin-top: 2px;
  padding: 0 0 3px;
}
table {
  margin-top: -4px;
  border-spacing: 0;
  table-layout: fixed;
  width: 361px;
}
th, td {
  padding: 0;
  height: 18px;
  font-weight: normal;
  vertical-align: top;
}
thead th, thead td {
  height: 16px;
  padding-right: 4px;
  white-space: nowrap;
}
thead td { width: 97px; }
tbody td { padding-right: 3px; }
tbody th {
  padding: 1px 9px 0 0;
  height: 17px;
  line-height: 16px;
  text-align: right;
  white-space: nowrap;
}
tbody tr:first-child th {
  height: 16px;
}
tbody tr:first-child td {
  height: 17px;
}

/* memory page */
.general {
  width: 371px;
  padding: 3px 0 6px;
}
.clocks {
  width: 293px;
  margin-top: 2px;
  padding: 2px 0 3px;
}
.columns { display: flex; }
.list {
  display: grid;
  grid-template-columns: 99px 100px;
  grid-auto-rows: 18px;
}
.list label { padding: 1px 8px 0 0; }
.list.narrow { grid-template-columns: 55px 100px; }
.list.wide { grid-template-columns: 187px 85px; }
.list.narrow label,
.list.wide label { padding-right: 13px; }

/* footer */
.footer {
  display: flex;
  align-items: center;
  gap: 3px;
  min-height: 20px;
  padding: 3px 2px 3px 7px;
}
.footer strong {
  color: #a0a0a0;
  font: italic bold 20px/20px "Liberation Sans", sans-serif;
}
.version {
  flex: 1;
  padding: 6px 0 0 8px;
  white-space: nowrap;
}
.push,
.tools {
  box-sizing: border-box;
  width: 75px;
  height: 20px;
  border: 1px solid #fff;
  border-right: 2px solid #808080;
  border-bottom: 2px solid #808080;
  background: #f0f0f0;
}
.tools {
  display: flex;
}
.tools button {
  flex: 1;
  border: 0;
  background: none;
}
.tools button + button {
  display: grid;
  flex: 0 0 16px;
  justify-content: center;
  padding-top: 6px;
  border-left: 1px solid #a0a0a0;
}

/* taskbar */
.taskbar {
  position: relative;
  display: flex;
  align-items: center;
  box-sizing: border-box;
  height: 40px;
  border-top: 1px solid #3a2406;
  background: linear-gradient(110deg, #704404 0, #8a5404 12%, #845000 28%, #8c5a10 38%, #8a5606 45%, #935f14 52%, #844e00 60%, #905c12 70%, #865204 78%, #6c4406 88%, #5c3a06);
  box-shadow: inset 0 1px 0 #c09a60;
}
.taskbar .orb {
  margin: 0 26px 0 8px;
  border: 0;
  background: none;
}
.task {
  display: grid;
  box-sizing: border-box;
  place-items: center;
  width: 50px;
  height: 38px;
  border: 0;
  background: none;
}
.task.plain { width: 34px; }
.task.framed {
  width: 59px;
  margin-left: 15px;
  border: 1px solid #2c1a04;
  border-radius: 3px;
  background: linear-gradient(120deg, #c4a478, #9c7030 45%, #8a5a18);
  box-shadow: inset 0 0 0 1px rgba(255, 236, 200, .55);
}
.task.framed.lit {
  width: 51px;
  margin-left: 3px;
  background: linear-gradient(120deg, #ece0cc, #c8ac84 50%, #b89464);
}
.stack {
  width: 3px;
  height: 36px;
  margin-left: -1px;
  border: 1px solid #c0a070;
  border-left-color: #3c2608;
  border-radius: 0 3px 3px 0;
  background: #9a7038;
}
.tray {
  display: flex;
  align-items: center;
  gap: 8px;
  height: 100%;
  margin-left: auto;
  color: #fff;
  font: 11px/17px "Open Sans", sans-serif;
}
.lang { margin: -4px 8px 0 0; }
.up { margin-right: 5px; }
.clock {
  display: flex;
  flex-direction: column;
  align-items: center;
  margin: 0 4px 0 9px;
}
.taskbar .peek {
  width: 14px;
  height: 39px;
  border: 1px solid #3c2608;
  background: linear-gradient(150deg, #b09068, #6c4810 60%);
  box-shadow: inset 0 0 0 1px #9a7c50;
}
</style>
